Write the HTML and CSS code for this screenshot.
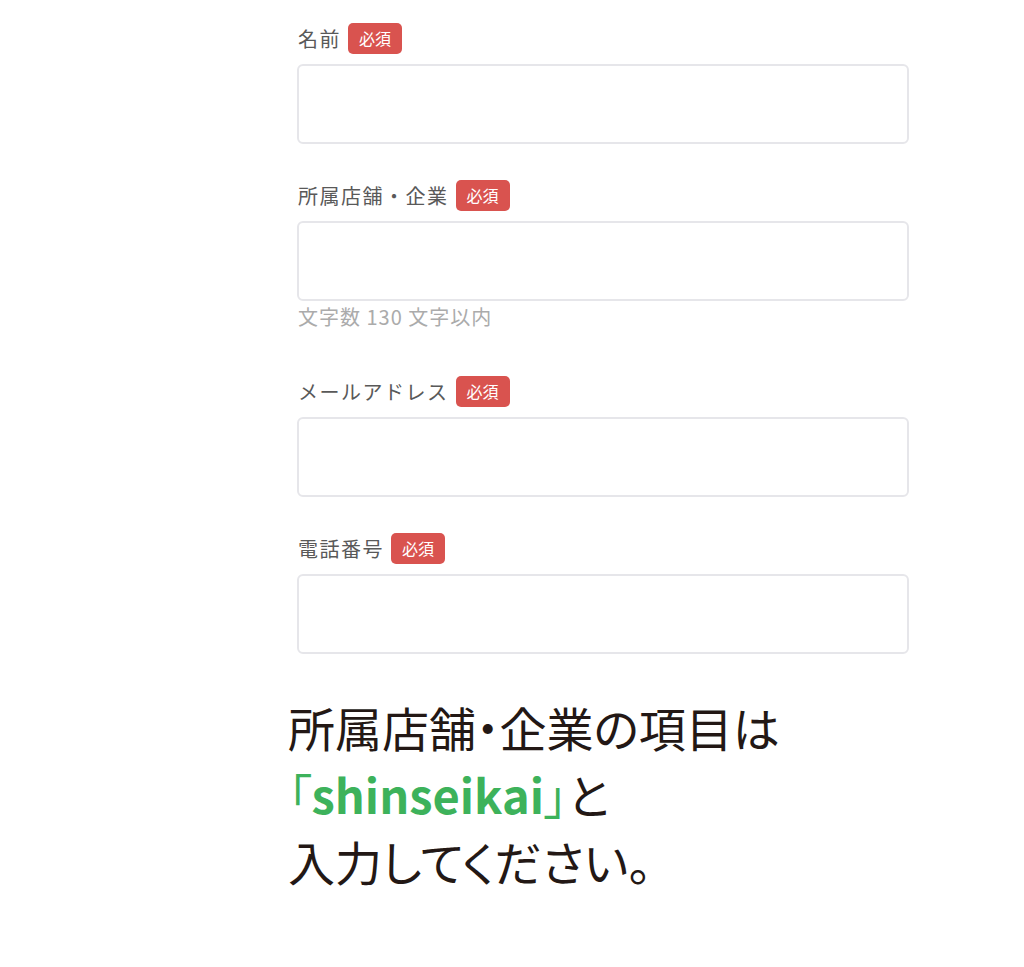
FILE: index.html
```html
<!DOCTYPE html>
<html lang="ja">
  <head>
    <meta charset="UTF-8" />
    <meta name="viewport" content="width=device-width, initial-scale=1.0" />
    <title>お問い合わせ</title>
    <link rel="stylesheet" href="styles.css">
  </head>

  <body>
    <form class="entry-form">
      <div class="field">
        <div class="field-label">
          名前
          <span class="badge">必須</span>
        </div>
        <input class="field-input" type="text" />
      </div>

      <div class="field">
        <div class="field-label">
          所属店舗・企業
          <span class="badge">必須</span>
        </div>
        <input class="field-input" type="text" />
        <div class="field-help">文字数 130 文字以内</div>
      </div>

      <div class="field">
        <div class="field-label">
          メールアドレス
          <span class="badge">必須</span>
        </div>
        <input class="field-input" type="email" />
      </div>

      <div class="field">
        <div class="field-label">
          電話番号
          <span class="badge">必須</span>
        </div>
        <input class="field-input" type="tel" />
      </div>
    </form>

    <p class="notice">
      所属店舗・企業の項目は<br />
      <span class="notice-green">「<span class="notice-word">shinseikai</span>」</span>と<br />
      入力してください。
    </p>
  </body>
</html>
```

FILE: styles.css
```css
body {
  margin: 0;
  background-color: #ffffff;
  font-family: "Noto Sans CJK JP", "Noto Sans", sans-serif;
}

.entry-form {
  display: flex;
  flex-direction: column;
  gap: 35px;
  width: 612px;
  margin-left: 297px;
  padding-top: 22px;
}

.field {
  display: flex;
  flex-direction: column;
}

.field-label {
  display: flex;
  align-items: center;
  gap: 7px;
  height: 32px;
  margin-bottom: 10px;
  padding-left: 1px;
  font-size: 20px;
  letter-spacing: 1.5px;
  color: #595959;
}

.badge {
  display: inline-flex;
  align-items: center;
  justify-content: center;
  width: 54px;
  height: 31px;
  border-radius: 5px;
  background-color: #d9534f;
  color: #fff;
  font-size: 16px;
  letter-spacing: 0;
}

.field-input {
  box-sizing: border-box;
  width: 100%;
  height: 80px;
  margin: 0;
  border: 2px solid #e6e6ea;
  border-radius: 6px;
  background-color: #fff;
}

.field-help {
  margin-top: 4px;
  margin-bottom: 11px;
  padding-left: 1px;
  line-height: 24px;
  font-size: 20px;
  letter-spacing: 1px;
  color: #ababab;
}

.notice {
  margin: 39px 0 0 288px;
  font-size: 47px;
  font-weight: 400;
  line-height: 67px;
  color: #231815;
  font-feature-settings: "palt";
}

.notice-green {
  color: #3db25b;
}

.notice-word {
  font-weight: 700;
}
```
